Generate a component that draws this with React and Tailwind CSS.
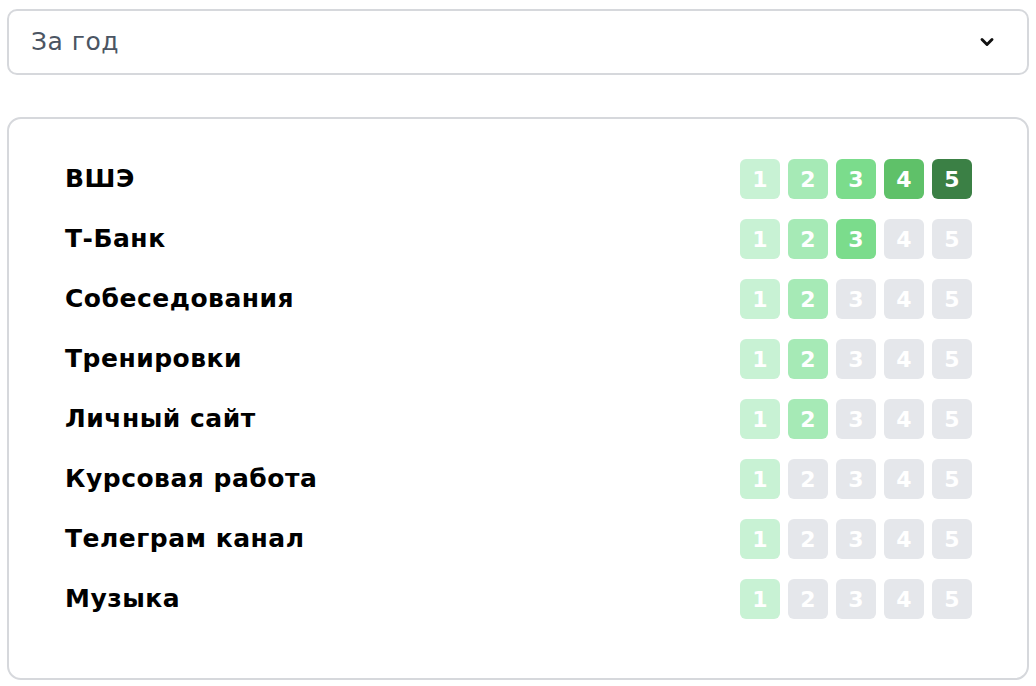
const rows = [
  { name: "ВШЭ", level: 5 },
  { name: "Т-Банк", level: 3 },
  { name: "Собеседования", level: 2 },
  { name: "Тренировки", level: 2 },
  { name: "Личный сайт", level: 2 },
  { name: "Курсовая работа", level: 1 },
  { name: "Телеграм канал", level: 1 },
  { name: "Музыка", level: 1 },
];

const levelColors = [
  "bg-[#c8f2d4]",
  "bg-[#a6eab6]",
  "bg-[#7bdc8c]",
  "bg-[#5fc169]",
  "bg-[#3b8045]",
];

function Scale({ level }) {
  return (
    <div className="flex gap-2">
      {[1, 2, 3, 4, 5].map((n) => (
        <div
          key={n}
          className={`w-10 h-10 rounded-md flex items-center justify-center text-white font-bold text-[22px] ${
            n <= level ? levelColors[n - 1] : "bg-[#e5e7eb]"
          }`}
        >
          {n}
        </div>
      ))}
    </div>
  );
}

export default function App() {
  return (
    <div
      className="bg-white w-[1036px] h-[686px] px-[7px] pt-[9px]"
      style={{ fontFamily: "'DejaVu Sans', 'Noto Sans', sans-serif" }}
    >
      {/* Period select */}
      <div className="h-[66px] border-2 border-[#d6d8dc] rounded-[10px] flex items-center justify-between pl-[22px] pr-[30px]">
        <span className="text-[25px] tracking-[0.5px] text-[#4b5563]">За год</span>
        <svg width="20" height="20" viewBox="0 0 24 24" fill="none" stroke="#111" strokeWidth="3.5" strokeLinecap="round" strokeLinejoin="round">
          <path d="M6 9l6 6 6-6" />
        </svg>
      </div>

      {/* Scores card */}
      <div className="mt-[42px] h-[563px] border-2 border-[#d6d8dc] rounded-[14px] pl-[56px] pr-[55px] pt-[40px]">
        <div className="flex flex-col gap-5">
          {rows.map((r) => (
            <div key={r.name} className="h-10 flex items-center justify-between">
              <span className="text-[25px] tracking-[0.5px] font-bold text-black">{r.name}</span>
              <Scale level={r.level} />
            </div>
          ))}
        </div>
      </div>
    </div>
  );
}
